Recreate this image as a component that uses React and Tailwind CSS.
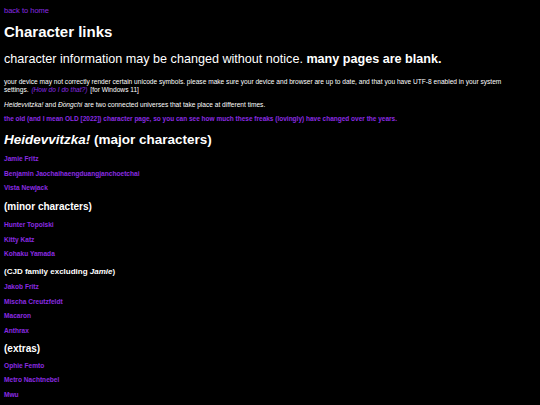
import React from "react";

const major = ["Jamie Fritz", "Benjamin Jaochaihaengduangjanchoetchai", "Vista Newjack"];
const minor = ["Hunter Topolski", "Kitty Katz", "Kohaku Yamada"];
const cjd = ["Jakob Fritz", "Mischa Creutzfeldt", "Macaron", "Anthrax"];
const extras = ["Ophie Femto", "Metro Nachtnebel", "Mwu"];

function LinkList({ names, first }) {
  return (
    <div className="flex flex-col">
      {names.map((n, i) => (
        <a
          key={n}
          href="#"
          className={
            (i === 0 ? first : "mt-[6.5px]") +
            " text-[6.6px] leading-[8px] font-bold text-[#8a2be2]"
          }
        >
          {n}
        </a>
      ))}
    </div>
  );
}

export default function App() {
  return (
    <div
      className="min-h-[405px] w-[540px] bg-black text-white px-[4px] pb-4 flex flex-col"
      style={{ fontFamily: '"Liberation Sans", Arial, sans-serif' }}
    >
      <a href="#" className="mt-[6.5px] text-[7.5px] leading-[8px] text-[#8a2be2]">
        back to home
      </a>
      <h1 className="mt-[8px] text-[15px] leading-[18px] font-bold">Character links</h1>
      <h2 className="mt-[10px] text-[12.6px] leading-[16px]">
        character information may be changed without notice. <b>many pages are blank.</b>
      </h2>
      <p className="mt-[11.5px] max-w-[510px] text-[6.6px] leading-[8px]">
        your device may not correctly render certain unicode symbols. please make sure your device and browser are up to date, and that you have UTF-8 enabled in your system settings.{" "}
        <a href="#" className="italic text-[#8a2be2] px-[1px]">(How do I do that?)</a> [for Windows 11]
      </p>
      <p className="mt-[6.5px] text-[6.6px] leading-[7.5px]">
        <i>Heidevvitzka!</i> and <i>Đồngchí</i> are two connected universes that take place at different times.
      </p>
      <a href="#" className="mt-[7px] text-[6.5px] leading-[7.5px] font-bold text-[#8a2be2]">
        the old (and I mean OLD [2022]) character page, so you can see how much these freaks (lovingly) have changed over the years.
      </a>

      <h2 className="mt-[8px] text-[13.5px] leading-[18px] font-bold">
        <i>Heidevvitzka!</i> (major characters)
      </h2>
      <LinkList names={major} first="mt-[6.5px]" />

      <h3 className="mt-[8px] text-[10px] leading-[14px] font-bold">(minor characters)</h3>
      <LinkList names={minor} first="mt-[7px]" />

      <h4 className="mt-[7.5px] text-[8px] leading-[11px] font-bold">
        (CJD family excluding <i>Jamie</i>)
      </h4>
      <LinkList names={cjd} first="mt-[6.5px]" />

      <h3 className="mt-[7.5px] text-[10px] leading-[14px] font-bold">(extras)</h3>
      <LinkList names={extras} first="mt-[5.5px]" />
    </div>
  );
}
